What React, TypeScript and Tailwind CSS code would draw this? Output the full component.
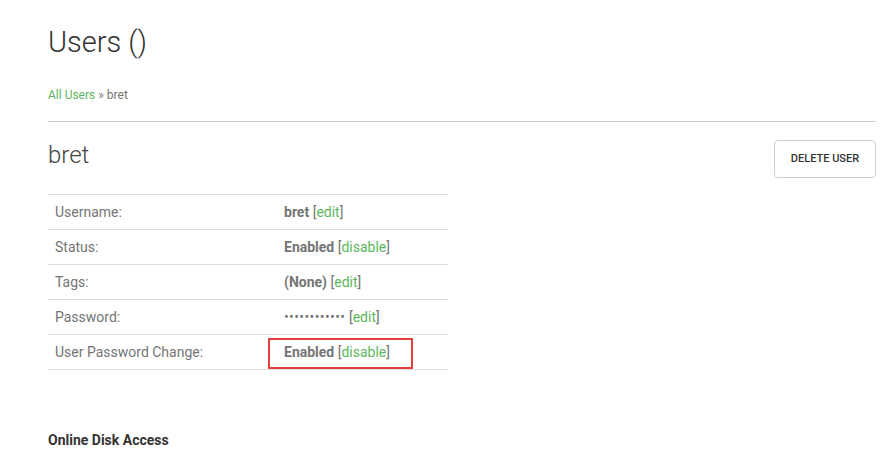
import { FC } from 'react';

const rows = [
  { label: 'Username:', value: 'bret', link: 'edit' },
  { label: 'Status:', value: 'Enabled', link: 'disable' },
  { label: 'Tags:', value: '(None)', link: 'edit' },
  { label: 'Password:', value: '••••••••••••', link: 'edit', plain: true },
  { label: 'User Password Change:', value: 'Enabled', link: 'disable', boxed: true },
];

const App: FC = () => {
  return (
    <div className="min-h-[462px] bg-white pl-[48px] pr-[14px] pt-[24px] font-['Roboto',sans-serif] text-[#757575]">
      <h1 className="text-[29px] font-light leading-[36px] text-[#333]">Users ()</h1>

      <div className="mt-[27px] text-[12px] leading-[16px]">
        <a className="text-[#5cb85c]">All Users</a> » bret
      </div>

      <hr className="mt-[18px] border-t border-[#cfcfcf]" />

      <div className="mt-[18px] flex items-start justify-between">
        <h2 className="mt-[1px] text-[24px] font-light leading-[28px] text-[#444]">bret</h2>
        <button className="h-[38px] w-[102px] rounded-[4px] border border-[#cfcfcf] text-[11px] font-medium text-[#333]">
          DELETE USER
        </button>
      </div>

      <table className="mt-[16px] w-[400px] border-collapse text-[14px]">
        <tbody>
          {rows.map((r) => (
            <tr key={r.label} className="h-[35px] border-y border-[#dedede]">
              <td className="w-[229px] pl-[7px]">{r.label}</td>
              <td className="relative pl-[7px]">
                {r.boxed && (
                  <span className="absolute left-[-9px] top-[3px] h-[31px] w-[145px] border-2 border-[#e53e3e]" />
                )}
                <span className={r.plain ? 'tracking-[0.4px]' : 'font-bold'}>{r.value}</span>{' '}
                [<a className="text-[#5cb85c]">{r.link}</a>]
              </td>
            </tr>
          ))}
        </tbody>
      </table>

      <h3 className="mt-[60px] text-[14px] font-bold leading-[20px] text-[#333]">Online Disk Access</h3>
    </div>
  );
};

export default App;
